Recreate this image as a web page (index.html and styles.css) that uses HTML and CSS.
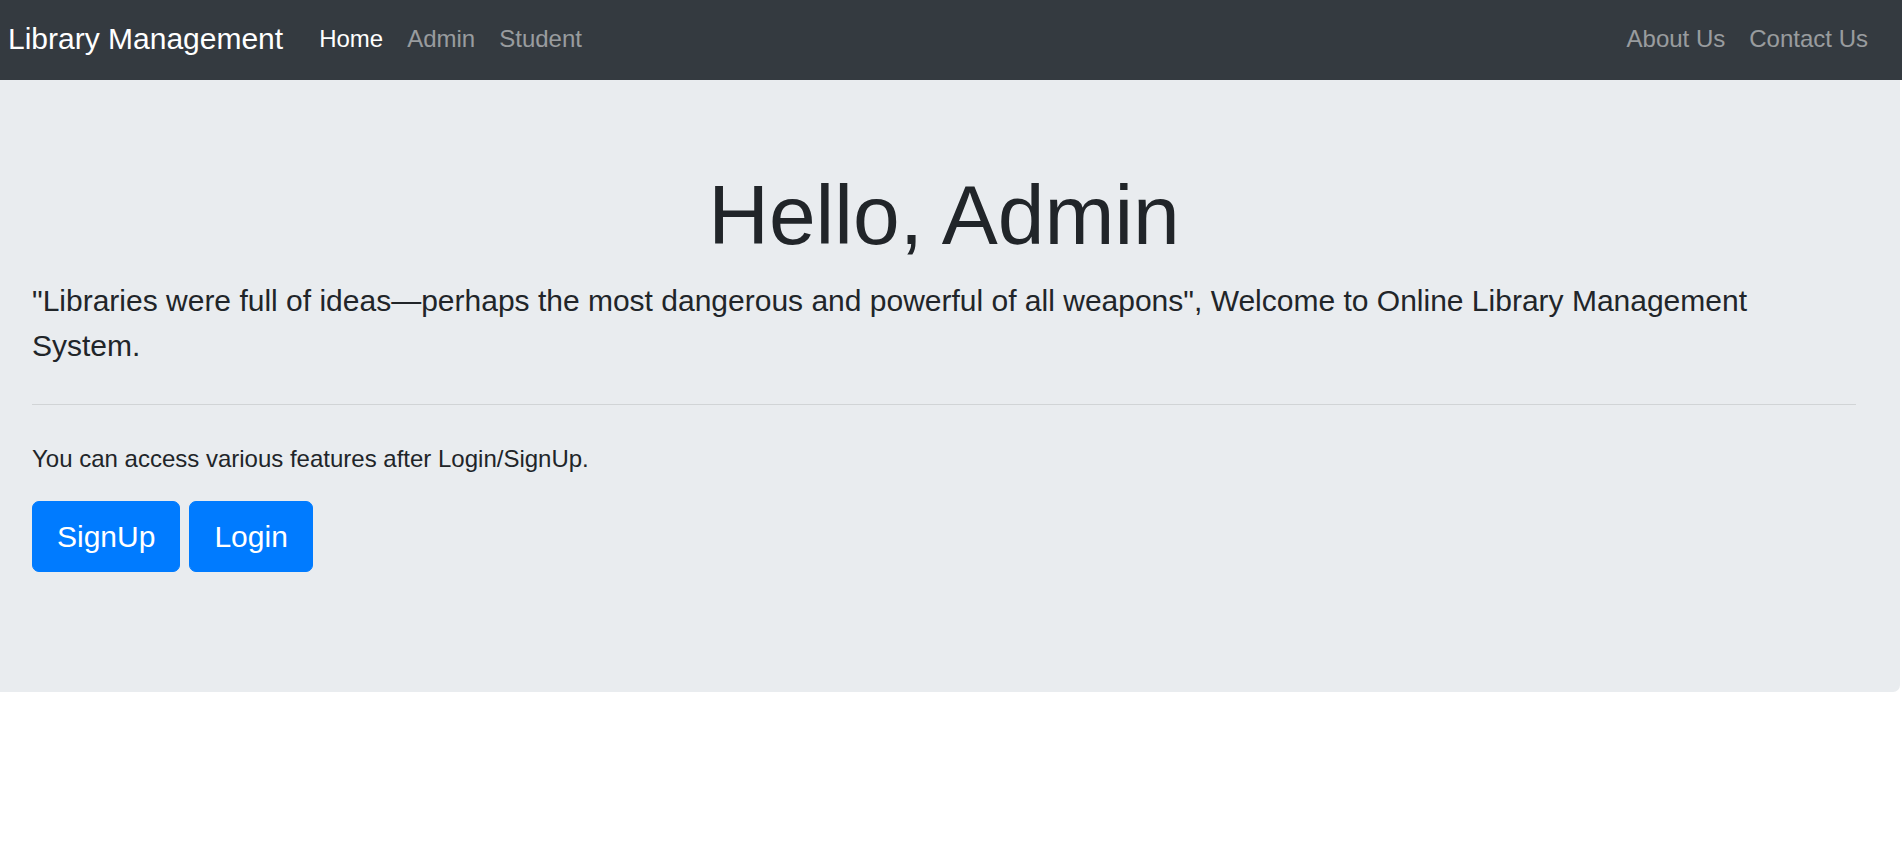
FILE: index.html
```html
<!DOCTYPE html>
<html lang="en">
<head>
<meta charset="utf-8">
<title>Library Management</title>
<link rel="stylesheet" href="styles.css">
</head>
<body>
<nav class="navbar">
  <a class="brand" href="#">Library Management</a>
  <ul class="nav-list">
    <li><a class="nav-link active" href="#">Home</a></li>
    <li><a class="nav-link" href="#">Admin</a></li>
    <li><a class="nav-link" href="#">Student</a></li>
  </ul>
  <ul class="nav-list nav-right">
    <li><a class="nav-link" href="#">About Us</a></li>
    <li><a class="nav-link" href="#">Contact Us</a></li>
  </ul>
</nav>
<section class="jumbotron">
  <h1 class="display">Hello, Admin</h1>
  <p class="lead">"Libraries were full of ideas—perhaps the most dangerous and powerful of all weapons", Welcome to Online Library Management System.</p>
  <hr class="divider">
  <p class="info">You can access various features after Login/SignUp.</p>
  <p class="actions">
    <a class="btn" href="#">SignUp</a>
    <a class="btn" href="#">Login</a>
  </p>
</section>
</body>
</html>
```
FILE: styles.css
```css
* { box-sizing: border-box; }
html, body {
  margin: 0;
  padding: 0;
  background: #fff;
  font-family: "Liberation Sans", Arial, sans-serif;
  color: #212529;
}
a { text-decoration: none; }

.navbar {
  display: flex;
  align-items: center;
  height: 80px;
  padding: 0 22px 3px 8px;
  background: #343a40;
}
.brand {
  font-size: 30px;
  line-height: 45px;
  color: #fff;
  margin-right: 24px;
  white-space: nowrap;
}
.nav-list {
  display: flex;
  list-style: none;
  margin: 0;
  padding: 0;
}
.nav-right { margin-left: auto; }
.nav-link {
  display: block;
  font-size: 24px;
  line-height: 36px;
  padding: 0 12px;
  color: rgba(255, 255, 255, 0.5);
  white-space: nowrap;
}
.nav-link.active { color: #fff; }

.jumbotron {
  background: #e9ecef;
  margin-right: 2px;
  padding: 85px 44px 96px 32px;
  border-radius: 0 0 7px 0;
}
.display {
  margin: 0 0 12px;
  font-size: 84px;
  line-height: 1.2;
  font-weight: 400;
  text-align: center;
}
.lead {
  margin: 0;
  font-size: 30px;
  line-height: 45px;
}
.divider {
  margin: 36px 0;
  border: 0;
  border-top: 1.5px solid rgba(0, 0, 0, 0.1);
}
.info {
  margin: 0 0 24px;
  font-size: 24px;
  line-height: 36px;
}
.actions {
  display: flex;
  gap: 9px;
  margin: 0 0 24px;
}
.btn {
  display: inline-block;
  padding: 12px 24px;
  font-size: 30px;
  line-height: 45px;
  color: #fff;
  background: #007bff;
  border: 1.5px solid #007bff;
  border-radius: 7px;
}
```
